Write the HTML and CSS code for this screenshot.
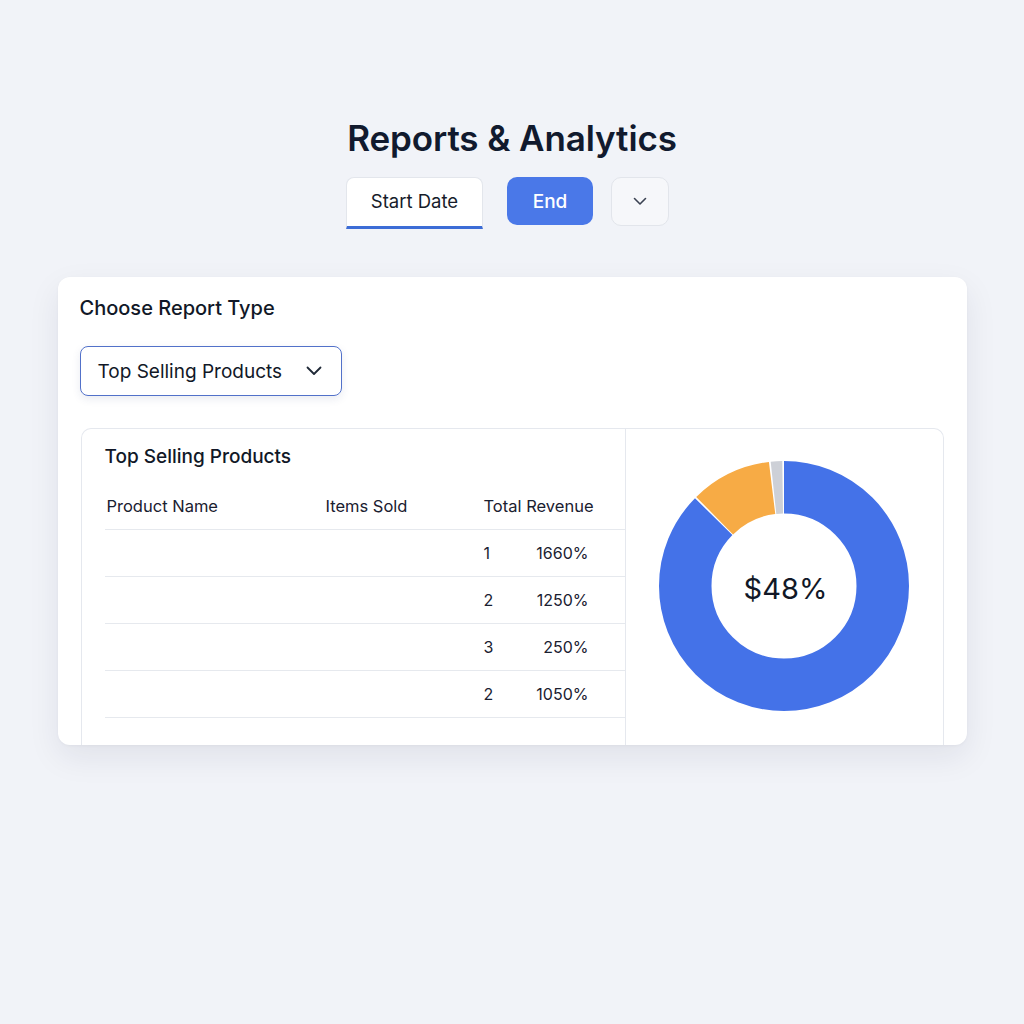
FILE: index.html
```html
<!DOCTYPE html>
<html>
<head>
<meta charset="utf-8">
<link rel="stylesheet" href="styles.css">
</head>
<body>
<main class="page">
  <h1 class="title">Reports &amp; Analytics</h1>
  <div class="toolbar">
    <button class="tab">Start Date</button>
    <button class="btn-primary">End</button>
    <button class="btn-icon" aria-label="More">
      <svg width="14" height="9" viewBox="0 0 14 9"><path d="M1.5 1.5 L7 7 L12.5 1.5" fill="none" stroke="#3b4252" stroke-width="1.6" stroke-linecap="round" stroke-linejoin="round"/></svg>
    </button>
  </div>

  <section class="card">
    <h2 class="card-label">Choose Report Type</h2>
    <div class="select">
      <span>Top Selling Products</span>
      <svg width="16" height="10" viewBox="0 0 16 10"><path d="M1.5 1.5 L8 8 L14.5 1.5" fill="none" stroke="#1f2937" stroke-width="1.8" stroke-linecap="round" stroke-linejoin="round"/></svg>
    </div>

    <div class="panel">
      <div class="panel-left">
        <h3 class="panel-title">Top Selling Products</h3>
        <div class="table">
          <div class="row head">
            <span class="c1">Product Name</span>
            <span class="c2">Items Sold</span>
            <span class="c3">Total Revenue</span>
          </div>
          <div class="row"><span class="c1"></span><span class="c2"></span><span class="c3 vals"><span class="num">1</span><span class="val">1660%</span></span></div>
          <div class="row"><span class="c1"></span><span class="c2"></span><span class="c3 vals"><span class="num">2</span><span class="val">1250%</span></span></div>
          <div class="row"><span class="c1"></span><span class="c2"></span><span class="c3 vals"><span class="num">3</span><span class="val">250%</span></span></div>
          <div class="row"><span class="c1"></span><span class="c2"></span><span class="c3 vals"><span class="num">2</span><span class="val">1050%</span></span></div>
        </div>
      </div>
      <div class="panel-right">
        <div class="donut">
          <svg width="252" height="252" viewBox="0 0 252 252">
            <g transform="rotate(-90 126 126)">
              <circle cx="126" cy="126" r="98.75" fill="none" stroke="#4472e8" stroke-width="52.5" pathLength="360" stroke-dasharray="314.6 360" stroke-dashoffset="0"/>
              <circle cx="126" cy="126" r="98.75" fill="none" stroke="#f7ab45" stroke-width="52.5" pathLength="360" stroke-dasharray="37.6 360" stroke-dashoffset="-315.4"/>
              <circle cx="126" cy="126" r="98.75" fill="none" stroke="#cdd0d7" stroke-width="52.5" pathLength="360" stroke-dasharray="5.4 360" stroke-dashoffset="-353.8"/>
            </g>
          </svg>
          <span class="donut-label">$48%</span>
        </div>
      </div>
    </div>
  </section>
</main>
</body>
</html>
```

FILE: styles.css
```css
* { box-sizing: border-box; }
html, body { margin: 0; padding: 0; }
body {
  background: #f1f3f8;
  font-family: "Inter", "Noto Sans", "Liberation Sans", sans-serif;
  color: #111827;
  width: 1024px;
  height: 1024px;
}
.page {
  display: flex;
  flex-direction: column;
  align-items: center;
  padding-top: 117px;
}
.title {
  margin: 0;
  font-size: 35px;
  line-height: 43px;
  font-weight: 600;
  color: #111a2e;
  letter-spacing: -0.1px;
}
.toolbar {
  display: flex;
  align-items: flex-start;
  margin-top: 17px;
  margin-right: 9px;
}
button {
  font-family: inherit;
  border: none;
  cursor: pointer;
}
.tab {
  width: 137px;
  height: 52px;
  background: #ffffff;
  border: 1px solid #e3e6ec;
  border-bottom: 3px solid #3c6cd6;
  border-radius: 8px 8px 0 0;
  font-size: 18.5px;
  color: #161c2a;
  padding: 0;
  padding-bottom: 2px;
}
.btn-primary {
  margin-left: 24px;
  width: 86px;
  height: 48px;
  background: #4a78e8;
  color: #ffffff;
  font-size: 19px;
  font-weight: 500;
  border-radius: 10px;
}
.btn-icon {
  margin-left: 18px;
  width: 58px;
  height: 49px;
  background: #f6f7fa;
  border: 1px solid #e2e5eb;
  border-radius: 10px;
  display: flex;
  align-items: center;
  justify-content: center;
}
.card {
  margin-top: 48px;
  width: 909px;
  height: 468px;
  background: #ffffff;
  border-radius: 12px;
  box-shadow: 0 12px 32px rgba(20, 30, 60, 0.08), 0 1px 3px rgba(20, 30, 60, 0.04);
  padding: 19px 23px 0 23px;
  overflow: hidden;
  display: flex;
  flex-direction: column;
}
.card-label {
  margin: 0 0 0 -1px;
  font-size: 20px;
  line-height: 24px;
  font-weight: 500;
  color: #111827;
}
.select {
  margin-top: 26px;
  margin-left: -1px;
  width: 262px;
  height: 50px;
  border: 1.5px solid #5271c9;
  border-radius: 8px;
  box-shadow: 0 3px 8px rgba(40, 60, 120, 0.10);
  display: flex;
  align-items: center;
  justify-content: space-between;
  padding: 0 19px 0 17px;
  font-size: 19px;
  color: #111827;
}
.panel {
  margin-top: 32px;
  flex: 1;
  border: 1px solid #e5e8ee;
  border-bottom: none;
  border-radius: 10px 10px 0 0;
  display: flex;
}
.panel-left {
  width: 544px;
  border-right: 1px solid #e5e8ee;
  padding: 16px 0 0 23px;
}
.panel-title {
  margin: 0;
  font-size: 19px;
  line-height: 24px;
  font-weight: 500;
  color: #111827;
}
.table {
  margin-top: 14px;
}
.row {
  display: grid;
  grid-template-columns: 221px 158px 1fr;
  align-items: center;
  height: 47px;
  border-bottom: 1px solid #e6e9ee;
  font-size: 16px;
  color: #1a2030;
}
.row.head {
  height: 47px;
  font-size: 16.5px;
}
.row.head .c1 { padding-left: 2px; }
.vals {
  display: flex;
  justify-content: space-between;
  padding-right: 36px;
}
.panel-right {
  flex: 1;
  display: flex;
  align-items: center;
  justify-content: center;
  padding-bottom: 2px;
}
.donut {
  position: relative;
  width: 252px;
  height: 252px;
}
.donut svg { display: block; }
.donut-label {
  position: absolute;
  inset: 0;
  display: flex;
  align-items: center;
  justify-content: center;
  font-size: 29px;
  font-weight: 400;
  color: #111827;
  padding-left: 3px;
  padding-top: 5px;
}
```
